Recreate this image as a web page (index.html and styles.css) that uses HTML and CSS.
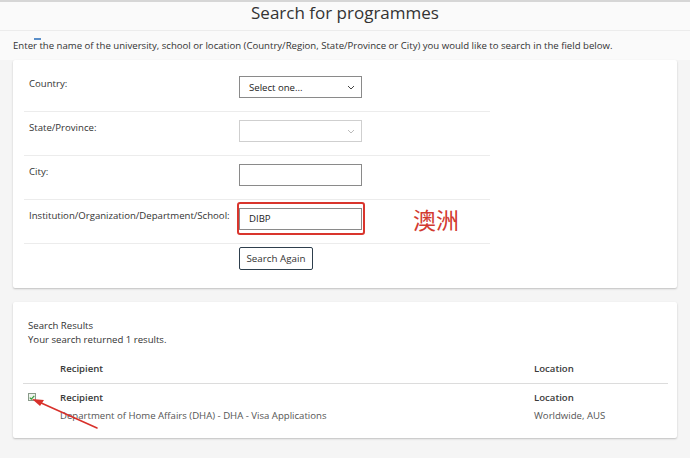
FILE: index.html
```html
<!DOCTYPE html>
<html>
<head>
<meta charset="utf-8">
<link rel="stylesheet" href="styles.css">
</head>
<body>
<header class="page-header">
  <h1 class="title">Search for programmes</h1>
  <span class="focus-mark"></span>
</header>
<p class="intro">Enter the name of the university, school or location (Country/Region, State/Province or City) you would like to search in the field below.</p>

<section class="card form-card">
  <div class="form-row">
    <label class="form-label">Country:</label>
    <div class="form-control">
      <div class="select">
        <span>Select one...</span>
        <svg class="chev" width="8" height="5" viewBox="0 0 8 5"><path d="M1 1l3 3 3-3" fill="none" stroke="#444" stroke-width="1"/></svg>
      </div>
    </div>
  </div>
  <div class="form-row">
    <label class="form-label">State/Province:</label>
    <div class="form-control">
      <div class="select disabled">
        <span></span>
        <svg class="chev" width="8" height="5" viewBox="0 0 8 5"><path d="M1 1l3 3 3-3" fill="none" stroke="#bbb" stroke-width="1"/></svg>
      </div>
    </div>
  </div>
  <div class="form-row">
    <label class="form-label">City:</label>
    <div class="form-control">
      <div class="input"></div>
    </div>
  </div>
  <div class="form-row">
    <label class="form-label">Institution/Organization/Department/School:</label>
    <div class="form-control">
      <div class="highlight">
        <div class="input">DIBP</div>
      </div>
      <span class="note">澳洲</span>
    </div>
  </div>
  <div class="form-row last">
    <span class="form-label"></span>
    <div class="form-control">
      <button class="btn">Search Again</button>
    </div>
  </div>
</section>

<section class="card results-card">
  <div class="results-title">Search Results</div>
  <div class="results-sub">Your search returned 1 results.</div>
  <div class="table">
    <div class="t-row t-head">
      <div class="c-check"></div>
      <div class="c-rec">Recipient</div>
      <div class="c-loc">Location</div>
    </div>
    <div class="t-row t-body">
      <div class="c-check">
        <span class="checkbox"><svg width="6" height="5" viewBox="0 0 6 5"><path d="M0.8 2.6l1.5 1.5 3-3.3" fill="none" stroke="#3a9a3a" stroke-width="1.2"/></svg></span>
      </div>
      <div class="c-rec">
        <div class="strong">Recipient</div>
        <div class="muted">Department of Home Affairs (DHA) - DHA - Visa Applications</div>
      </div>
      <div class="c-loc">
        <div class="strong">Location</div>
        <div class="muted">Worldwide, AUS</div>
      </div>
    </div>
  </div>
  <svg class="arrow" width="80" height="40" viewBox="0 0 80 40">
    <path d="M68 34 L10 8" stroke="#d8312b" stroke-width="1.6" stroke-linecap="round" fill="none"/>
    <path d="M3 5 L15 6 L11 12 Z" fill="#d8312b"/>
  </svg>
</section>
</body>
</html>
```
FILE: styles.css
```css
* { box-sizing: border-box; }
html, body { margin: 0; padding: 0; }
body {
  width: 690px;
  height: 458px;
  overflow: hidden;
  background: #f5f5f5;
  font-family: "Open Sans", "Noto Sans", sans-serif;
  color: #333;
  position: relative;
}
.page-header {
  border-top: 2px solid #d6d6d6;
  border-bottom: 1px solid #ececec;
  background: #fafafa;
  height: 31px;
  position: relative;
}
.title {
  margin: 0;
  text-align: center;
  font-weight: 400;
  font-size: 17px;
  line-height: 22px;
  color: #333;
}
.focus-mark {
  position: absolute;
  left: 34px;
  top: 36px;
  width: 7px;
  height: 2px;
  background: #5b8fc9;
}
.intro {
  margin: 0;
  padding: 8px 13px 7px;
  font-size: 9.6px;
  line-height: 14px;
  color: #333;
  background: #fafafa;
}
.card {
  margin: 0 13px;
  background: #fff;
  box-shadow: 0 1px 2px rgba(0,0,0,0.22);
  border-radius: 2px;
}
.form-card {
  padding: 8px 0 0 11px;
}
.form-row {
  width: 466px;
  display: flex;
  border-bottom: 1px solid #ececec;
  padding: 8px 0 13px;
}
.form-row.last {
  border-bottom: none;
  padding: 3px 0 18px;
}
.form-label {
  width: 215px;
  padding-left: 5px;
  font-size: 9.6px;
  line-height: 14px;
  color: #333;
  padding-top: 1px;
}
.form-control {
  display: flex;
  align-items: center;
}
.select {
  width: 123px;
  height: 22px;
  border: 1px solid #8a8a8a;
  display: flex;
  align-items: center;
  justify-content: space-between;
  padding: 0 6px 0 9px;
  font-size: 9.6px;
  color: #222;
}
.select.disabled { border-color: #cfcfcf; }
.input {
  width: 123px;
  height: 22px;
  border: 1px solid #8a8a8a;
  font-size: 9.6px;
  line-height: 20px;
  padding-left: 9px;
  color: #222;
}
.highlight {
  position: relative;
}
.highlight::after {
  content: "";
  position: absolute;
  left: -2px;
  top: -6px;
  right: -3px;
  bottom: -5px;
  border: 2px solid #d9352d;
  border-radius: 3px;
}
.note {
  margin-left: 51px;
  font-family: "Noto Sans CJK SC", "Noto Sans", sans-serif;
  font-size: 23px;
  line-height: 22px;
  color: #d23a30;
}
.btn {
  width: 74px;
  height: 23px;
  padding: 0;
  border: 1px solid #2e3f4d;
  border-radius: 2px;
  background: #fff;
  font-family: "Open Sans", sans-serif;
  font-size: 9.8px;
  color: #333;
}
.results-card {
  margin-top: 14px;
  padding: 17px 9px 14px 10px;
  position: relative;
}
.results-title, .results-sub {
  padding-left: 5px;
  font-size: 9.6px;
  line-height: 14px;
  color: #333;
}
.t-row {
  display: flex;
}
.t-head {
  padding: 15px 0 7px;
  border-bottom: 1px solid #dcdcdc;
  font-size: 9.6px;
  line-height: 14px;
  font-weight: 600;
  color: #3a3a3a;
}
.t-body {
  padding-top: 5px;
  font-size: 9.6px;
  line-height: 17.5px;
}
.c-check { width: 37px; padding-left: 5px; }
.c-rec { width: 474px; }
.c-loc { flex: 1; }
.strong { font-weight: 600; color: #3a3a3a; }
.muted { color: #555; }
.checkbox {
  display: flex;
  align-items: center;
  justify-content: center;
  width: 8px;
  height: 8px;
  margin-top: 4px;
  border: 1px solid #8a9a8a;
  background: #eef5ee;
}
.arrow {
  position: absolute;
  left: 16px;
  top: 92px;
}
```
